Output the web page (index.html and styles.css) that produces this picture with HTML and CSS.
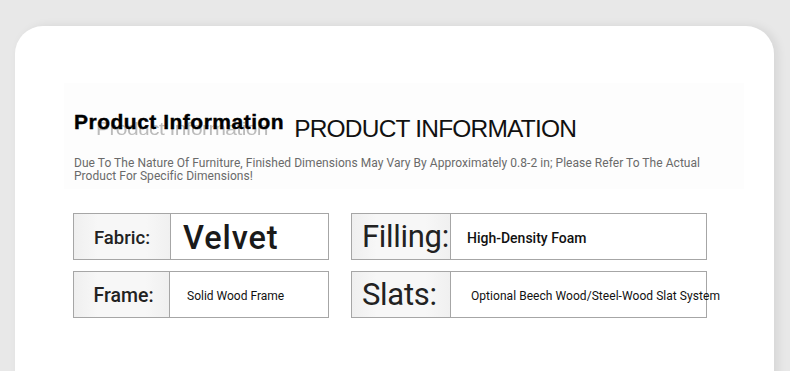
FILE: index.html
```html
<!DOCTYPE html>
<html lang="en">
<head>
<meta charset="utf-8">
<title>Product Information</title>
<link rel="stylesheet" href="styles.css">
</head>
<body>
<main class="card">
  <section class="intro">
    <div class="heading">
      <h1 class="title-en">Product Information<span class="echo" aria-hidden="true">Product Information</span></h1>
      <h2 class="title-caps">PRODUCT INFORMATION</h2>
    </div>
    <p class="note">Due To The Nature Of Furniture, Finished Dimensions May Vary By Approximately 0.8-2 in; Please Refer To The Actual Product For Specific Dimensions!</p>
  </section>

  <section class="specs">
    <div class="spec">
      <div class="spec-key key-fabric">Fabric:</div>
      <div class="spec-val val-velvet">Velvet</div>
    </div>
    <div class="spec spec-wide">
      <div class="spec-key key-big">Filling:</div>
      <div class="spec-val val-mid">High-Density Foam</div>
    </div>
    <div class="spec">
      <div class="spec-key key-frame">Frame:</div>
      <div class="spec-val val-small">Solid Wood Frame</div>
    </div>
    <div class="spec spec-wide">
      <div class="spec-key key-big">Slats:</div>
      <div class="spec-val val-small val-slats">Optional Beech Wood/Steel-Wood Slat System</div>
    </div>
  </section>
</main>
</body>
</html>
```

FILE: styles.css
```css
html, body {
  margin: 0;
  padding: 0;
}

body {
  background: #e8e8e8;
  height: 371px;
  overflow: hidden;
  font-family: Roboto, "Liberation Sans", Arial, sans-serif;
  color: #222;
}

.card {
  margin: 26px 0 0 15px;
  width: 759px;
  height: 400px;
  background: #ffffff;
  border-radius: 28px 28px 0 0;
  box-shadow: 4px 0 10px rgba(0, 0, 0, 0.08);
  padding: 57px 0 0 49px;
  box-sizing: border-box;
}

/* heading block */
.intro {
  width: 670px;
  background: #fdfdfd;
  padding: 0 0 6px 10px;
}

.heading {
  display: flex;
  align-items: flex-end;
  height: 58px;
}

.title-en {
  position: relative;
  z-index: 0;
  margin: 0 10px 9px 0;
  font-family: "Liberation Sans", Arial, sans-serif;
  font-weight: 700;
  font-size: 21px;
  letter-spacing: 0.5px;
  -webkit-text-stroke: 0.4px #000;
  line-height: 1;
  color: #000;
  white-space: nowrap;
}

/* faint shadow copy peeking out below the bold title */
.echo {
  position: absolute;
  left: 22px;
  top: 7px;
  font-weight: 400;
  letter-spacing: -0.6px;
  -webkit-text-stroke: 0;
  color: #a0a0a0;
  opacity: 0.7;
  transform: scaleY(0.9);
  filter: blur(0.3px);
  z-index: -1;
  white-space: nowrap;
}

.title-caps {
  margin: 0;
  font-family: "Liberation Sans", Arial, sans-serif;
  font-weight: 400;
  font-size: 24.5px;
  letter-spacing: -0.8px;
  line-height: 1;
  color: #111;
  white-space: nowrap;
}

.note {
  margin: 16px 0 0 0;
  font-family: Roboto, "Liberation Sans", sans-serif;
  font-size: 12px;
  line-height: 13px;
  letter-spacing: 0.05px;
  color: #6a6a6a;
  width: 635px;
}

/* spec grid */
.specs {
  display: grid;
  grid-template-columns: 256px 356px;
  grid-auto-rows: 47px;
  column-gap: 22px;
  row-gap: 11px;
  margin: 24px 0 0 9px;
}

.spec {
  display: flex;
  border: 1px solid #a6a6a6;
  box-sizing: border-box;
  background: #fff;
}

.spec-key {
  width: 96px;
  flex: none;
  border-right: 1px solid #a6a6a6;
  background: linear-gradient(90deg, #efefef 0%, #f7f7f7 25%, #f7f7f7 75%, #f0f0f0 100%);
  display: flex;
  align-items: center;
  justify-content: center;
  color: #222;
  white-space: nowrap;
}

.spec-wide .spec-key {
  width: 99px;
  justify-content: flex-start;
  padding-left: 10px;
  box-sizing: border-box;
}

.key-fabric {
  font-size: 18.5px;
  font-weight: 500;
  padding-top: 2px;
}

.key-frame {
  font-size: 19.5px;
  font-weight: 500;
  padding-top: 2px;
  padding-left: 4px;
  box-sizing: border-box;
}

.key-big {
  font-size: 31px;
  font-weight: 400;
  letter-spacing: -0.3px;
}

.spec-val {
  display: flex;
  align-items: center;
  white-space: nowrap;
  color: #111;
}

.val-velvet {
  font-size: 32.5px;
  font-weight: 500;
  padding-left: 12px;
  padding-top: 3px;
  letter-spacing: 0.9px;
  color: #1a1a1a;
}

.val-mid {
  font-size: 14px;
  font-weight: 500;
  padding-left: 16px;
  padding-top: 2px;
}

.val-small {
  font-size: 12px;
  padding-left: 17px;
  padding-top: 2px;
}

.val-slats {
  padding-left: 20px;
  letter-spacing: 0.05px;
}
```
